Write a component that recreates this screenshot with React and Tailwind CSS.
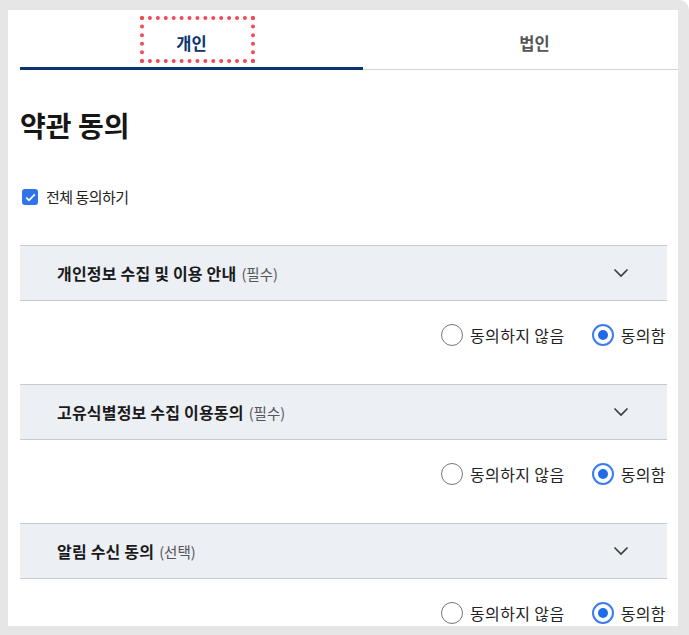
import { useState } from 'react';

const font = { fontFamily: '"Noto Sans CJK KR", "Noto Sans", sans-serif' };

const sections = [
  { title: '개인정보 수집 및 이용 안내', tag: '(필수)' },
  { title: '고유식별정보 수집 이용동의', tag: '(필수)' },
  { title: '알림 수신 동의', tag: '(선택)' },
];

function Chevron() {
  return (
    <svg width="16" height="10" viewBox="0 0 16 10" fill="none">
      <path d="M1.5 1.5 L8 8 L14.5 1.5" stroke="#3a3a3a" strokeWidth="1.6" />
    </svg>
  );
}

function Radio({ checked, label, onClick }) {
  return (
    <button type="button" onClick={onClick} className="flex items-center gap-[7px]">
      <span
        className={`flex h-[22px] w-[22px] items-center justify-center rounded-full bg-white ${
          checked ? 'border-2 border-[#3a7df0]' : 'border border-[#777]'
        }`}
      >
        {checked && <span className="h-[10px] w-[10px] rounded-full bg-[#1f6ce8]" />}
      </span>
      <span className="text-[16px] tracking-[0.4px] text-[#222]">{label}</span>
    </button>
  );
}

function Section({ title, tag }) {
  const [agree, setAgree] = useState(true);
  return (
    <div>
      <div className="flex h-[56px] items-center justify-between border-y border-[#c9cacd] bg-[#eceff4] pl-[37px] pr-[38px]">
        <div className="flex items-baseline gap-[5px]">
          <span className="text-[16px] font-bold tracking-[0.2px] text-[#1a1a1a]">{title}</span>
          <span className="text-[14.5px] text-[#555]">{tag}</span>
        </div>
        <Chevron />
      </div>
      <div className="flex h-[83px] items-start justify-end gap-[27px] pt-[22px] pr-px">
        <Radio checked={!agree} label="동의하지 않음" onClick={() => setAgree(false)} />
        <Radio checked={agree} label="동의함" onClick={() => setAgree(true)} />
      </div>
    </div>
  );
}

export default function App() {
  const [tab, setTab] = useState(0);
  return (
    <div className="h-[635px] w-[689px] bg-white" style={font}>
      <div className="h-full rounded-tr-[10px] bg-[#e6e6e6] pt-[10px] pb-[9px] pl-[8px] pr-[11px]">
        <div className="h-full overflow-hidden bg-white px-[12px] pr-[11px]">
          <div className="flex w-[686px]">
            <button
              type="button"
              onClick={() => setTab(0)}
              className="flex h-[60px] w-[343px] shrink-0 justify-center border-b-[3px] border-[#0b3470] pt-[10px]"
            >
              <span className="ml-[11px] flex h-[39px] w-[107px] items-center justify-center pt-[8px] pr-[11px] text-[16.5px] font-bold text-[#0b3470] outline-4 outline-dotted outline-[#ef4a55]">
                개인
              </span>
            </button>
            <button
              type="button"
              onClick={() => setTab(1)}
              className="flex h-[60px] w-[343px] shrink-0 justify-center border-b border-[#d4d4d4] pt-[10px]"
            >
              <span className="flex h-[39px] w-[107px] items-center justify-center pt-[8px] text-[16.5px] font-bold text-[#555]">
                법인
              </span>
            </button>
          </div>

          <h1 className="mt-[37px] text-[28px] font-bold leading-[36px] text-[#161616]">
            약관 동의
          </h1>

          <label className="mt-[43px] flex items-center gap-[8px] pl-[2px]">
            <span className="flex h-[16px] w-[16px] items-center justify-center rounded-[3px] bg-[#2f74ed]">
              <svg width="11" height="9" viewBox="0 0 11 9" fill="none">
                <path d="M1.2 4.6 L4 7.3 L9.8 1.4" stroke="white" strokeWidth="1.7" />
              </svg>
            </span>
            <span className="text-[15px] tracking-[-0.5px] text-[#222]">전체 동의하기</span>
          </label>

          <div className="mt-[36px]">
            {sections.map((s) => (
              <Section key={s.title} {...s} />
            ))}
          </div>
        </div>
      </div>
    </div>
  );
}
